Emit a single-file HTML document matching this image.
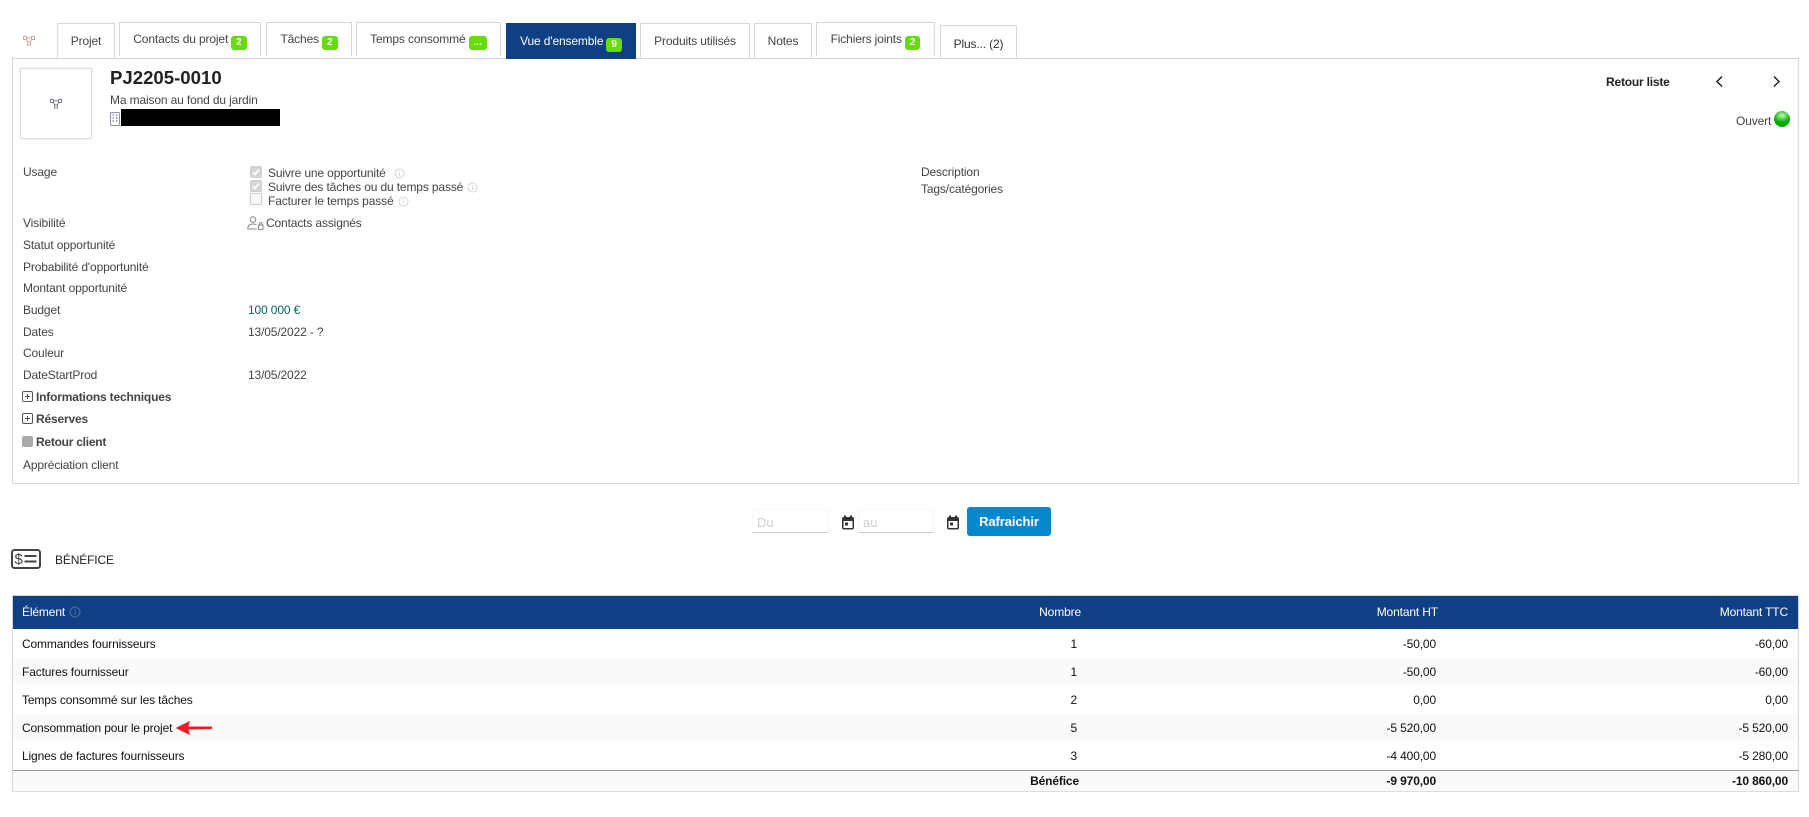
<!DOCTYPE html>
<html lang="fr">
<head>
<meta charset="utf-8">
<title>PJ2205-0010</title>
<style>
html,body{margin:0;padding:0;background:#fff;}
body{width:1809px;height:817px;position:relative;overflow:hidden;font-family:"Liberation Sans",Arial,sans-serif;font-size:12px;color:#444;letter-spacing:-.14px;}
.a{position:absolute;}
.t{position:absolute;white-space:nowrap;line-height:14px;height:14px;}
.r{text-align:right;}
.tab{position:absolute;box-sizing:border-box;border:1px solid #d6d6d6;border-bottom:0;background:#fff;white-space:nowrap;line-height:14px;font-size:12px;color:#444;text-align:center;}
.b{display:inline-block;background:#66dd0a;color:#fff;font-weight:bold;font-size:10px;line-height:14px;height:14px;padding:0 5px;border-radius:3px;margin-left:3px;vertical-align:-2px;letter-spacing:0;}
.k{color:#111;}
.cb{position:absolute;box-sizing:border-box;width:12px;height:12px;border-radius:2px;background:#d6d6d6;border:1px solid #d0d0d0;}
.cb svg{position:absolute;left:0;top:0;}
.cb.e{background:#fafafa;border-color:#ccc;}
.ex{position:absolute;box-sizing:border-box;width:11px;height:11px;border:1px solid #555;border-radius:2px;}
.ex:before{content:"";position:absolute;left:2px;top:4px;width:5px;height:1px;background:#555;}
.ex:after{content:"";position:absolute;left:4px;top:2px;width:1px;height:5px;background:#555;}
.row{position:absolute;left:13px;width:1785px;}
.inp{position:absolute;box-sizing:border-box;height:24px;border:1px solid #f7f7f7;border-bottom:1px solid #ccc;color:#ccc;font-size:13px;line-height:25px;padding-left:4px;letter-spacing:0;}
</style>
</head>
<body>

<svg class="a" style="left:22px;top:35px" width="14" height="12" viewBox="0 0 14 12" fill="none" stroke="#c8aca4" stroke-width="1"><rect x="1.500" y="1.500" width="3" height="3"/><rect x="9.500" y="1.500" width="3" height="3"/><rect x="5.500" y="7" width="3" height="3"/><path d="M4.500 3h5M4 4.500l2 2.500M10 4.500l-2 2.500"/></svg>

<div class="tab" style="left:57px;top:23px;width:58px;height:36px;padding-top:10px;">Projet</div>
<div class="tab" style="left:119px;top:22px;width:142px;height:34px;padding-top:9px;">Contacts du projet<span class="b">2</span></div>
<div class="tab" style="left:266px;top:22px;width:86px;height:34px;padding-top:9px;">Tâches<span class="b">2</span></div>
<div class="tab" style="left:356px;top:22px;width:145px;height:34px;padding-top:9px;">Temps consommé<span class="b" style="padding:0 5px">...</span></div>
<div class="tab" style="left:506px;top:23px;width:130px;height:36px;padding-top:10px;background:#0e4083;border-color:#0e4083;color:#fff;">Vue d'ensemble<span class="b">9</span></div>
<div class="tab" style="left:640px;top:23px;width:110px;height:36px;padding-top:10px;">Produits utilisés</div>
<div class="tab" style="left:754px;top:23px;width:58px;height:36px;padding-top:10px;">Notes</div>
<div class="tab" style="left:816px;top:22px;width:119px;height:34px;padding-top:9px;">Fichiers joints<span class="b">2</span></div>
<div class="tab" style="left:940px;top:25px;width:77px;height:34px;padding-top:11px;color:#333;">Plus... (2)</div>

<div class="a" style="left:12px;top:58px;width:1787px;height:426px;box-sizing:border-box;border:1px solid #d6d6d6;"></div>
<div class="a" style="left:506px;top:57px;width:130px;height:2px;background:#0e4083;"></div>

<div class="a" style="left:20px;top:68px;width:72px;height:71px;box-sizing:border-box;border:1px solid #ddd;box-shadow:0 0 2px #e4e4e4;"></div>
<svg class="a" style="left:49px;top:98px" width="14" height="12" viewBox="0 0 14 12" fill="none" stroke="#7a7d8a" stroke-width="1"><rect x="1.500" y="1.500" width="3" height="3"/><rect x="9.500" y="1.500" width="3" height="3"/><rect x="5.500" y="7" width="3" height="3"/><path d="M4.500 3h5M4 4.500l2 2.500M10 4.500l-2 2.500"/></svg>

<div class="t" style="left:110px;top:71px;font-size:18.6px;font-weight:bold;color:#222;letter-spacing:0;">PJ2205-0010</div>
<div class="t" style="left:110px;top:93px;color:#444;">Ma maison au fond du jardin</div>
<svg class="a" style="left:110px;top:112px" width="10" height="14" viewBox="0 0 10 14" fill="none" stroke="#8a8fc0" stroke-width="1"><rect x=".5" y=".5" width="9" height="13" rx="1"/><path d="M2.500 3h1.500M6 3h1.500M2.500 6h1.500M6 6h1.500M2.500 9h1.500M6 9h1.500" stroke="#555a80"/></svg>
<div class="a" style="left:121px;top:109px;width:159px;height:17px;background:#000;"></div>

<div class="t" style="left:1606px;top:75px;font-weight:bold;color:#222;letter-spacing:-.2px;">Retour liste</div>
<svg class="a" style="left:1715px;top:75px" width="9" height="13" viewBox="0 0 9 13" fill="none" stroke="#222" stroke-width="1.500"><path d="M7 1.500L2 6.500l5 5"/></svg>
<svg class="a" style="left:1772px;top:75px" width="9" height="13" viewBox="0 0 9 13" fill="none" stroke="#222" stroke-width="1.500"><path d="M2 1.500l5 5-5 5"/></svg>
<div class="t" style="left:1736px;top:114px;color:#444;">Ouvert</div>
<div class="a" style="left:1774px;top:111px;width:16px;height:16px;border-radius:50%;background:radial-gradient(ellipse 9px 7px at 50% 28%,#cdf3c4 0%,#4fd04a 55%,#0aa80a 100%);"></div>

<div class="t" style="left:23px;top:165px;">Usage</div>
<div class="cb" style="left:250px;top:166px;"><svg width="10" height="10" viewBox="0 0 10 10" fill="none" stroke="#fff" stroke-width="1.600"><path d="M2 5l2 2.500 4-5"/></svg></div>
<div class="cb" style="left:250px;top:180px;"><svg width="10" height="10" viewBox="0 0 10 10" fill="none" stroke="#fff" stroke-width="1.600"><path d="M2 5l2 2.500 4-5"/></svg></div>
<div class="cb e" style="left:250px;top:193px;"></div>
<div class="t" style="left:268px;top:166px;">Suivre une opportunité</div>
<div class="t" style="left:268px;top:180px;">Suivre des tâches ou du temps passé</div>
<div class="t" style="left:268px;top:194px;">Facturer le temps passé</div>
<svg class="a" style="left:394px;top:168px" width="11" height="11" viewBox="0 0 11 11" fill="none" stroke="#d4d4d4"><circle cx="5.500" cy="5.500" r="4.500"/><path d="M5.500 3v1M5.500 5v3"/></svg>
<svg class="a" style="left:467px;top:182px" width="11" height="11" viewBox="0 0 11 11" fill="none" stroke="#d4d4d4"><circle cx="5.500" cy="5.500" r="4.500"/><path d="M5.500 3v1M5.500 5v3"/></svg>
<svg class="a" style="left:398px;top:196px" width="11" height="11" viewBox="0 0 11 11" fill="none" stroke="#d4d4d4"><circle cx="5.500" cy="5.500" r="4.500"/><path d="M5.500 3v1M5.500 5v3"/></svg>

<div class="t" style="left:921px;top:165px;">Description</div>
<div class="t" style="left:921px;top:182px;">Tags/catégories</div>

<div class="t" style="left:23px;top:216px;">Visibilité</div>
<svg class="a" style="left:247px;top:216px" width="17" height="14" viewBox="0 0 17 14" fill="none" stroke="#888" stroke-width="1"><circle cx="6" cy="3.500" r="2.800"/><path d="M.7 13c0-3.500 2-5 5.300-5 1.500 0 2.700.3 3.500 1M.7 13h9"/><rect x="11.500" y="9" width="4.500" height="4.500"/><path d="M12.500 9V7.800a1.300 1.300 0 0 1 2.600 0V9"/></svg>
<div class="t" style="left:266px;top:216px;">Contacts assignés</div>
<div class="t" style="left:23px;top:238px;">Statut opportunité</div>
<div class="t" style="left:23px;top:260px;">Probabilité d'opportunité</div>
<div class="t" style="left:23px;top:281px;">Montant opportunité</div>
<div class="t" style="left:23px;top:303px;">Budget</div>
<div class="t" style="left:248px;top:303px;color:#006a60;">100 000 €</div>
<div class="t" style="left:23px;top:325px;">Dates</div>
<div class="t" style="left:248px;top:325px;">13/05/2022 - ?</div>
<div class="t" style="left:23px;top:346px;">Couleur</div>
<div class="t" style="left:23px;top:368px;">DateStartProd</div>
<div class="t" style="left:248px;top:368px;">13/05/2022</div>
<div class="ex" style="left:22px;top:391px;"></div>
<div class="t" style="left:36px;top:390px;font-weight:bold;letter-spacing:-.18px;">Informations techniques</div>
<div class="ex" style="left:22px;top:413px;"></div>
<div class="t" style="left:36px;top:412px;font-weight:bold;letter-spacing:-.18px;">Réserves</div>
<div class="a" style="left:22px;top:436px;width:11px;height:11px;border-radius:2px;background:#aaa;"></div>
<div class="t" style="left:36px;top:435px;font-weight:bold;letter-spacing:-.25px;">Retour client</div>
<div class="t" style="left:23px;top:458px;">Appréciation client</div>

<div class="inp" style="left:752px;top:509px;width:77px;">Du</div>
<svg class="a" style="left:841px;top:515px" width="14" height="15" viewBox="0 0 14 15"><rect x="1" y="2" width="12" height="12.500" rx="2" fill="#333"/><rect x="2.500" y="6" width="9" height="7" fill="#fff"/><rect x="3" y="0.500" width="2" height="3" fill="#333"/><rect x="9" y="0.500" width="2" height="3" fill="#333"/><rect x="4" y="7.500" width="3" height="3" fill="#333"/></svg>
<div class="inp" style="left:858px;top:509px;width:76px;">au</div>
<svg class="a" style="left:946px;top:515px" width="14" height="15" viewBox="0 0 14 15"><rect x="1" y="2" width="12" height="12.500" rx="2" fill="#333"/><rect x="2.500" y="6" width="9" height="7" fill="#fff"/><rect x="3" y="0.500" width="2" height="3" fill="#333"/><rect x="9" y="0.500" width="2" height="3" fill="#333"/><rect x="4" y="7.500" width="3" height="3" fill="#333"/></svg>
<div class="a" style="left:967px;top:507px;width:84px;height:29px;background:#0587cd;border-radius:3px;color:#fff;font-weight:bold;font-size:13px;line-height:29px;text-align:center;letter-spacing:-.1px;">Rafraichir</div>

<svg class="a" style="left:11px;top:549px" width="30" height="20" viewBox="0 0 30 20" fill="none" stroke="#444"><rect x="1" y="1" width="28" height="18" rx="2.500" stroke-width="2"/><path d="M13.500 7h12M13.500 12.500h12" stroke-width="2"/><text x="3.500" y="15" font-family="Liberation Sans, sans-serif" font-size="15" fill="#444" stroke="none">$</text></svg>
<div class="t" style="left:55px;top:553px;color:#222;">BÉNÉFICE</div>

<div class="a" style="left:12px;top:595px;width:1787px;height:197px;box-sizing:border-box;border:1px solid #d6d6d6;border-bottom:2px solid #ddd;"></div>
<div class="row" style="top:596px;height:33px;background:#0e4083;"></div>
<div class="row" style="top:658px;height:27px;background:#fafafa;"></div>
<div class="row" style="top:714px;height:27px;background:#fafafa;"></div>
<div class="row" style="top:770px;height:1px;background:#999;"></div>
<div class="row" style="top:771px;height:20px;background:#fafafa;"></div>

<div class="t" style="left:22px;top:605px;color:#fff;">Élément</div>
<svg class="a" style="left:69px;top:606px" width="12" height="12" viewBox="0 0 12 12" fill="none" stroke="#4f75a8"><circle cx="6" cy="6" r="5"/><path d="M6 3v1M6 5v4"/></svg>
<div class="t r" style="right:728px;top:605px;color:#fff;">Nombre</div>
<div class="t r" style="right:371px;top:605px;color:#fff;">Montant HT</div>
<div class="t r" style="right:21px;top:605px;color:#fff;">Montant TTC</div>

<div class="t k" style="left:22px;top:637px;">Commandes fournisseurs</div>
<div class="t k r" style="right:732px;top:637px;">1</div>
<div class="t k r" style="right:373px;top:637px;">-50,00</div>
<div class="t k r" style="right:21px;top:637px;">-60,00</div>

<div class="t k" style="left:22px;top:665px;">Factures fournisseur</div>
<div class="t k r" style="right:732px;top:665px;">1</div>
<div class="t k r" style="right:373px;top:665px;">-50,00</div>
<div class="t k r" style="right:21px;top:665px;">-60,00</div>

<div class="t k" style="left:22px;top:693px;">Temps consommé sur les tâches</div>
<div class="t k r" style="right:732px;top:693px;">2</div>
<div class="t k r" style="right:373px;top:693px;">0,00</div>
<div class="t k r" style="right:21px;top:693px;">0,00</div>

<div class="t k" style="left:22px;top:721px;">Consommation pour le projet</div>
<svg class="a" style="left:175px;top:720px" width="38" height="16" viewBox="0 0 38 16"><path d="M0.500 8L15 1l-1.500 5.500L37 6.500v2.500L13.500 9.500 15 15z" fill="#ed1c24"/></svg>
<div class="t k r" style="right:732px;top:721px;">5</div>
<div class="t k r" style="right:373px;top:721px;">-5 520,00</div>
<div class="t k r" style="right:21px;top:721px;">-5 520,00</div>

<div class="t k" style="left:22px;top:749px;">Lignes de factures fournisseurs</div>
<div class="t k r" style="right:732px;top:749px;">3</div>
<div class="t k r" style="right:373px;top:749px;">-4 400,00</div>
<div class="t k r" style="right:21px;top:749px;">-5 280,00</div>

<div class="t k r" style="right:730px;top:774px;font-weight:bold;">Bénéfice</div>
<div class="t k r" style="right:373px;top:774px;font-weight:bold;">-9 970,00</div>
<div class="t k r" style="right:21px;top:774px;font-weight:bold;">-10 860,00</div>

</body>
</html>
